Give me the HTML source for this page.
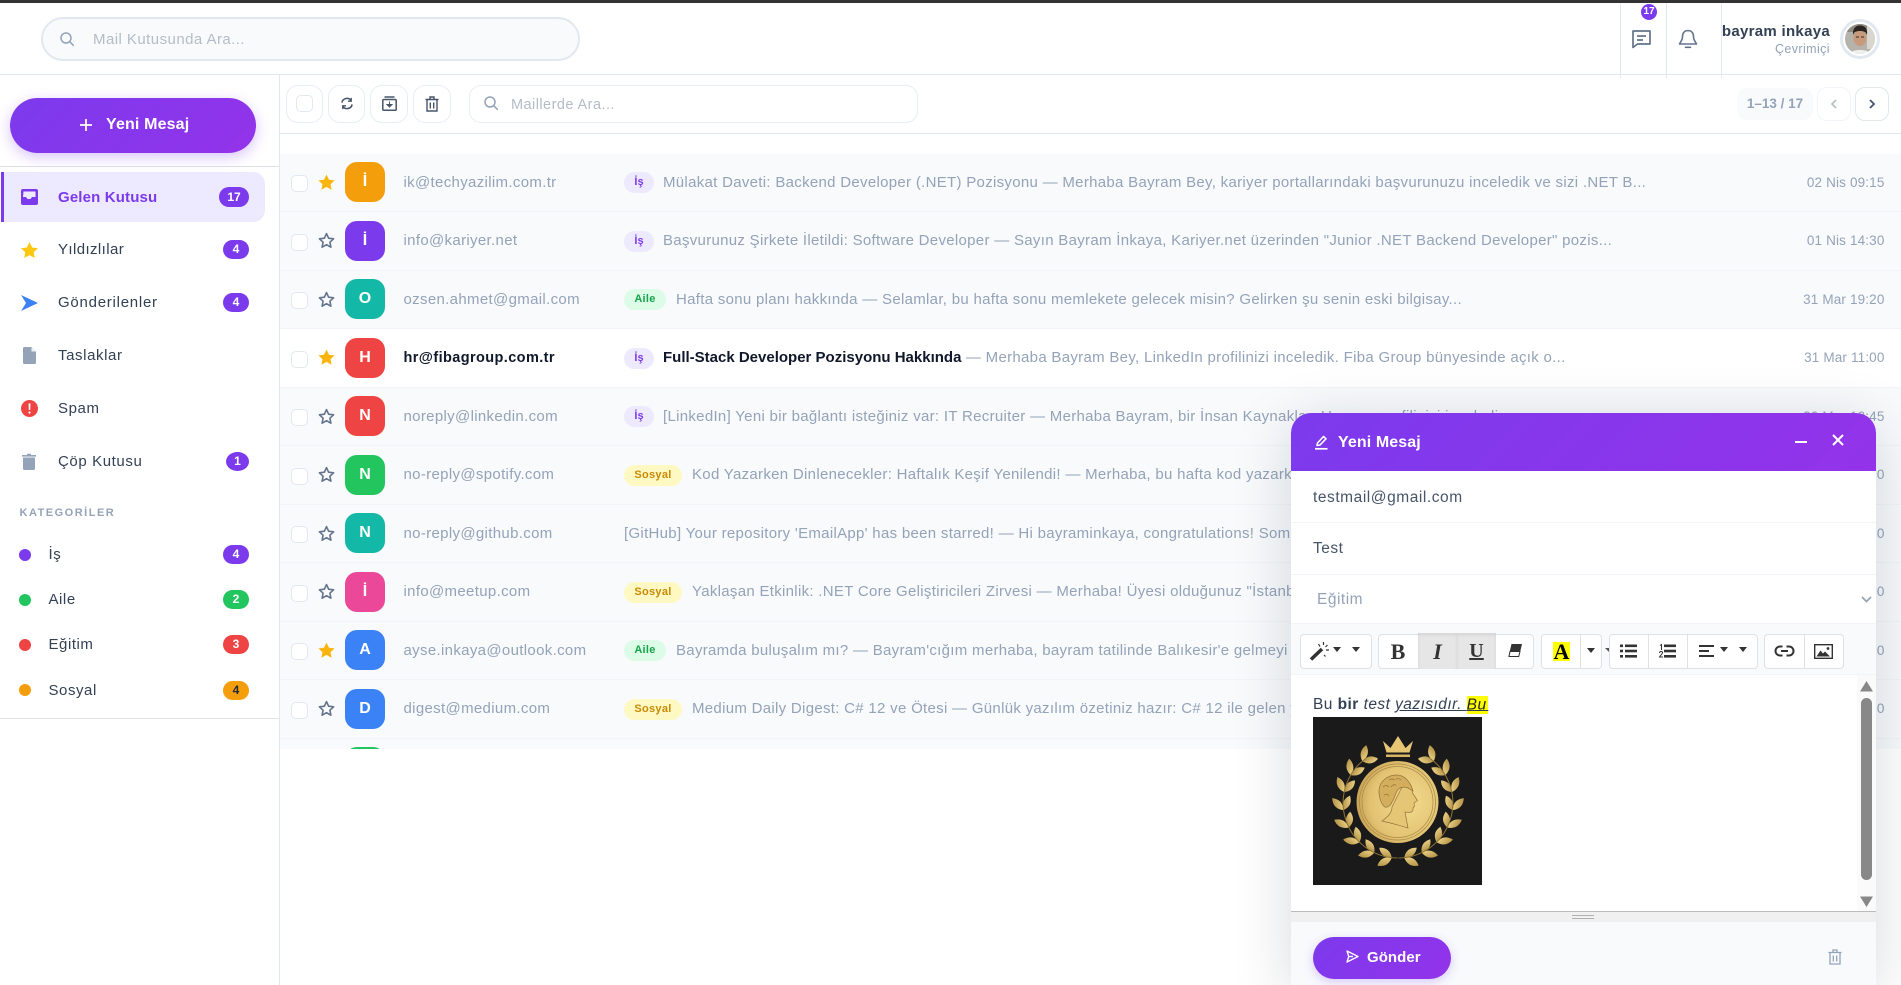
<!DOCTYPE html>
<html lang="tr"><head><meta charset="utf-8"><title>Mail</title>
<style>
*{box-sizing:border-box;margin:0;padding:0}
html,body{width:1901px;height:985px;overflow:hidden;background:#fff;font-family:"Liberation Sans",sans-serif;color:#334155}
.a{position:absolute}
.t{position:absolute;white-space:nowrap}
svg{position:absolute;display:block;overflow:visible}
.line{position:absolute;background:#e2e8f0}
.nav{position:absolute;left:58px;font-size:15px;line-height:20px;color:#334155;letter-spacing:.6px;white-space:nowrap}
.cat{position:absolute;left:48.5px;font-size:15px;line-height:20px;color:#334155;letter-spacing:.55px;white-space:nowrap}
.bd{position:absolute;height:19px;border-radius:10px;background:#7c3aed;color:#fff;font-size:12px;font-weight:700;line-height:19px;text-align:center}
.dot{position:absolute;left:19px;width:12px;height:12px;border-radius:50%}
.row{position:absolute;left:280px;width:1621px;height:58.5px;background:#f8fafc;border-bottom:1px solid #f1f5f9}
.row.w{background:#fff}
.cb{position:absolute;left:11px;top:21.5px;width:17px;height:17px;border:1.5px solid #e2e8f0;border-radius:5px;background:#fff}
.av{position:absolute;left:65px;top:8.5px;width:40px;height:40px;border-radius:12px;color:#fff;font-weight:700;font-size:16px;line-height:40px;text-align:center}
.em{position:absolute;left:123.5px;top:0;line-height:58px;font-size:15px;color:#94a3b8;letter-spacing:.33px;white-space:nowrap}
.w .em{color:#0f172a;font-weight:700;font-size:14.5px;letter-spacing:.4px}
.tag{position:absolute;left:344px;top:18.5px;height:21px;border-radius:11px;font-size:11px;font-weight:700;line-height:21px;text-align:center;letter-spacing:.3px}
.ts{width:30px;background:#ede9fe;color:#7c3aed;letter-spacing:0}
.ta{width:42px;background:#dcfce7;color:#16a34a}
.to{width:58px;background:#fef9c3;color:#ca8a04}
.tx{position:absolute;top:0;line-height:58px;font-size:15px;color:#94a3b8;letter-spacing:.3px;white-space:nowrap}
.tx b{color:#0f172a;font-weight:700;letter-spacing:0}
.dt{position:absolute;right:16.5px;top:0;line-height:58px;font-size:13.5px;color:#94a3b8;letter-spacing:.15px;white-space:nowrap}
.tb{position:absolute;left:286px;top:85px;height:38px;border:1.5px solid #e8edf4;border-radius:12px;background:#fff}
.grp{position:absolute;top:634px;height:35px;border:1px solid #dee2e6;border-radius:4px;background:#fff}
.sep{position:absolute;top:634px;width:1px;height:35px;background:#dee2e6}
</style></head><body>
<svg width="0" height="0" style="position:absolute"><defs>
<path id="so" d="M8.500 1.600l2.100 4.600 5 .6-3.700 3.400 1 5-4.400-2.500-4.400 2.500 1-5L1.400 6.800l5-.6z" fill="none" stroke="#64748b" stroke-width="1.600" stroke-linejoin="round"/>
<path id="sf" d="M8.500 .6l2.500 5.100 5.600.7-4.100 3.800 1.100 5.500-5.100-2.800-5.100 2.800 1.100-5.500L.4 6.400 6 5.700z" fill="#fbb40a"/>
<g id="lf">
<path d="M84.500 141q-2.750 10.450-13.500 9.500q2.750-10.450 13.500-9.500z"/>
<path d="M84.500 141q-3.050-10.150-13.500-8.500q3.050 10.150 13.500 8.500z"/>
</g>
<g id="wr">
<use href="#lf" transform="rotate(6 85 86)"/><use href="#lf" transform="rotate(25 85 86)"/><use href="#lf" transform="rotate(44 85 86)"/><use href="#lf" transform="rotate(63 85 86)"/><use href="#lf" transform="rotate(82 85 86)"/><use href="#lf" transform="rotate(101 85 86)"/><use href="#lf" transform="rotate(120 85 86)"/><use href="#lf" transform="rotate(139 85 86)"/>
<path d="M84.500 141A55 55 0 0 1 53.500 41" fill="none" stroke="#8f7434" stroke-width="1"/>
</g>
<radialGradient id="gd" cx=".62" cy=".5" r=".65"><stop offset="0" stop-color="#f3dc8d"/><stop offset=".7" stop-color="#e3c273"/><stop offset="1" stop-color="#c39d50"/></radialGradient>
<linearGradient id="lv" x1="0" y1="0" x2="0" y2="1"><stop offset="0" stop-color="#e8cd82"/><stop offset="1" stop-color="#b59548"/></linearGradient>
</defs></svg>

<!-- top bar + header -->
<div class="a" style="left:0;top:0;width:1901px;height:3px;background:#333"></div>
<div class="line" style="left:0;top:74px;width:1901px;height:1px"></div>
<div class="a" style="left:41px;top:17px;width:539px;height:44px;background:#f8fafc;border:2px solid #e2e8f0;border-radius:22px"></div>
<svg style="left:60px;top:32px" width="14" height="14" viewBox="0 0 14 14" fill="none" stroke="#94a3b8" stroke-width="1.500"><circle cx="6" cy="6" r="5"/><path d="M10 10l3.300 3.300" stroke-linecap="round"/></svg>
<div class="t" style="left:93px;top:30px;line-height:20px;font-size:15px;color:#b4bcc8;letter-spacing:.45px">Mail Kutusunda Ara...</div>

<div class="line" style="left:1620px;top:3px;width:1px;height:75px"></div>
<div class="line" style="left:1666px;top:3px;width:1px;height:75px"></div>
<div class="line" style="left:1721px;top:3px;width:1px;height:75px"></div>
<svg style="left:1631px;top:29px" width="20" height="20" viewBox="0 0 20 20" fill="none" stroke="#64748b" stroke-width="1.700" stroke-linejoin="round"><path d="M2 2h17v13H6.500L2 18.500z"/><path d="M6 7h9M6 11h6"/></svg>
<div class="a" style="left:1641px;top:4px;width:16px;height:16px;border-radius:50%;background:#7c3aed;color:#fff;font-size:10px;font-weight:700;line-height:16px;text-align:center">17</div>
<svg style="left:1678px;top:29px" width="20" height="20" viewBox="0 0 20 20" fill="none" stroke="#64748b" stroke-width="1.600" stroke-linejoin="round"><path d="M10 1.500c-3.800 0-5.500 3-5.500 6 0 4-2.500 6-3 7.500h17c-.5-1.500-3-3.500-3-7.500 0-3-1.700-6-5.500-6z"/><path d="M7.500 18.300h5" stroke-linecap="round"/></svg>
<div class="t" style="right:71px;top:22px;line-height:20px;font-size:15px;font-weight:700;color:#334155;letter-spacing:.3px">bayram inkaya</div>
<div class="t" style="right:71px;top:41px;line-height:16px;font-size:12.500px;color:#94a3b8;letter-spacing:.4px">Çevrimiçi</div>
<svg style="left:1840px;top:19px" width="40" height="40" viewBox="0 0 40 40"><circle cx="20" cy="20" r="18.500" fill="#fff" stroke="#e2e8f0" stroke-width="3"/><clipPath id="pc"><circle cx="20" cy="20" r="15"/></clipPath><g clip-path="url(#pc)"><rect width="40" height="40" fill="#b5b3ac"/><rect y="0" width="40" height="13" fill="#8d8a80"/><rect x="27" width="10" height="30" fill="#d8d6cf"/><path d="M8 40c0-7 5-9 12-9s12 2 12 9z" fill="#eef0f0"/><ellipse cx="20" cy="19" rx="6.500" ry="8" fill="#c89a7c"/><path d="M13 16c-.5-7 3-9.500 7-9.500s8 2.500 7 9.500c-1-3-3-4-7-4s-6 1-7 4z" fill="#2a2422"/><path d="M16 18h3M21 18h3" stroke="#3a2a22" stroke-width="1"/></g></svg>

<!-- sidebar -->
<div class="line" style="left:279px;top:75px;width:1px;height:910px"></div>
<div class="a" style="left:10px;top:98px;width:246px;height:55px;border-radius:28px;background:linear-gradient(135deg,#7c3aed,#9333ea);box-shadow:0 4px 14px rgba(124,58,237,.3)"></div>
<svg style="left:80px;top:119px" width="12" height="12" viewBox="0 0 12 12" stroke="#fff" stroke-width="1.700"><path d="M6 0v12M0 6h12"/></svg>
<div class="t" style="left:106px;top:115px;line-height:20px;font-size:16px;font-weight:700;color:#fff;letter-spacing:.15px">Yeni Mesaj</div>
<div class="a" style="left:0;top:166px;width:279px;height:1px;background:#dcdfe3"></div>
<div class="a" style="left:1px;top:172px;width:264px;height:50px;background:#ede9fe;border-left:3px solid #7c3aed;border-radius:0 12px 12px 0"></div>

<svg style="left:21px;top:189px" width="17" height="16" viewBox="0 0 17 16"><rect width="17" height="16" rx="2" fill="#7c3aed"/><path d="M2.500 2.500h12v5.500h-3.500l-1.500 2h-3l-1.500-2h-3z" fill="#ede9fe"/></svg>
<div class="nav" style="top:188px;color:#7c3aed;font-weight:700;letter-spacing:.15px">Gelen Kutusu</div>
<div class="bd" style="left:219px;top:187px;width:30px;height:20px;line-height:20px">17</div>

<svg style="left:21px;top:242px" width="17" height="17" viewBox="0 0 17 17"><path d="M8.500 0l2.600 5.500 5.900.7-4.300 4 1.100 5.800-5.300-2.900-5.300 2.900 1.100-5.800L0 6.200l5.900-.7z" fill="#ffc70f"/></svg>
<div class="nav" style="top:240px;letter-spacing:.4px">Yıldızlılar</div>
<div class="bd" style="left:223px;top:240px;width:26px">4</div>

<svg style="left:21px;top:295px" width="17" height="16" viewBox="0 0 17 16"><path d="M0 0l17 8L0 16l5-8z" fill="#3b82f6"/></svg>
<div class="nav" style="top:293px;letter-spacing:.75px">Gönderilenler</div>
<div class="bd" style="left:223px;top:293px;width:26px">4</div>

<svg style="left:23px;top:347px" width="13" height="17" viewBox="0 0 13 17"><path d="M1.500 0h7l4.500 4.500v11a1.500 1.500 0 0 1-1.500 1.500h-10A1.500 1.500 0 0 1 0 15.500v-14A1.500 1.500 0 0 1 1.500 0z" fill="#94a3b8"/><path d="M8.500 0v4.500H13z" fill="#eef2f7"/></svg>
<div class="nav" style="top:346px">Taslaklar</div>

<svg style="left:21px;top:399.500px" width="17" height="17" viewBox="0 0 17 17"><circle cx="8.500" cy="8.500" r="8.500" fill="#ef4444"/><path d="M7.500 3.500h2l-.3 6.500H7.800z" fill="#fff"/><circle cx="8.500" cy="12.500" r="1.100" fill="#fff"/></svg>
<div class="nav" style="top:399px">Spam</div>

<svg style="left:21px;top:453px" width="16" height="17" viewBox="0 0 16 17"><path d="M1 2h5V.8h4V2h5v1.600H1z" fill="#94a3b8"/><path d="M2 4.500h12v11a1.500 1.500 0 0 1-1.500 1.500h-9A1.500 1.500 0 0 1 2 15.500z" fill="#94a3b8"/></svg>
<div class="nav" style="top:452px">Çöp Kutusu</div>
<div class="bd" style="left:226px;top:452px;width:23px;border-radius:50%">1</div>

<div class="t" style="left:19.500px;top:505px;line-height:16px;font-size:11px;font-weight:700;color:#94a3b8;letter-spacing:1.500px">KATEGORİLER</div>

<div class="dot" style="top:549px;background:#7c3aed"></div><div class="cat" style="top:545px">İş</div><div class="bd" style="left:223px;top:545px;width:26px">4</div>
<div class="dot" style="top:594px;background:#22c55e"></div><div class="cat" style="top:590px">Aile</div><div class="bd" style="left:223px;top:590px;width:26px;background:#22c55e">2</div>
<div class="dot" style="top:639px;background:#ef4444"></div><div class="cat" style="top:635px">Eğitim</div><div class="bd" style="left:223px;top:635px;width:26px;background:#ef4444">3</div>
<div class="dot" style="top:684px;background:#f59e0b"></div><div class="cat" style="top:681px">Sosyal</div><div class="bd" style="left:223px;top:681px;width:26px;background:#f59e0b;color:#1f2937">4</div>
<div class="a" style="left:0;top:718px;width:279px;height:1px;background:#e2e4e8"></div>

<!-- mail toolbar -->
<div class="line" style="left:280px;top:133px;width:1621px;height:1px"></div>
<div class="tb" style="left:286px;width:37px"></div>
<div class="a" style="left:296px;top:95px;width:17px;height:17px;border:1.500px solid #e2e8f0;border-radius:5px"></div>
<div class="tb" style="left:328px;width:37px"></div>
<svg style="left:340px;top:97px" width="14" height="13" viewBox="0 0 14 14" fill="none" stroke="#475569" stroke-width="1.700"><path d="M1.500 6A5.500 5.500 0 0 1 11.500 4M12.500 8A5.500 5.500 0 0 1 2.500 10"/><path d="M11.500 1v3.500H8M2.500 13V9.500H6" stroke-width="1.500"/></svg>
<div class="tb" style="left:370px;width:38px"></div>
<svg style="left:382px;top:96px" width="15" height="15" viewBox="0 0 15 15" fill="none" stroke="#475569" stroke-width="1.500"><rect x=".8" y="3.500" width="13.400" height="10.700" rx="1"/><path d="M2.500 1h10"/><path d="M7.500 5.500v5M5 8.500l2.500 2.500 2.500-2.500z" fill="#475569" stroke-width="1"/></svg>
<div class="tb" style="left:413px;width:38px"></div>
<svg style="left:425px;top:96px" width="14" height="16" viewBox="0 0 14 16" fill="none" stroke="#475569" stroke-width="1.400"><path d="M.5 3.500h13M5 3.500V1h4v2.500"/><path d="M2 3.500v11.500h10V3.500M5.300 6.500v6M8.700 6.500v6"/></svg>
<div class="tb" style="left:469px;width:449px"></div>
<svg style="left:484px;top:96px" width="14" height="14" viewBox="0 0 14 14" fill="none" stroke="#94a3b8" stroke-width="1.500"><circle cx="6" cy="6" r="5"/><path d="M10 10l3.300 3.300" stroke-linecap="round"/></svg>
<div class="t" style="left:511px;top:95px;line-height:20px;font-size:14.500px;color:#b4bcc8;letter-spacing:.45px">Maillerde Ara...</div>

<div class="a" style="left:1737px;top:88px;width:76px;height:32px;background:#f8fafc;border-radius:10px;color:#94a3b8;font-size:13.500px;font-weight:700;line-height:32px;text-align:center">1–13 / 17</div>
<div class="a" style="left:1817px;top:87px;width:34px;height:34px;border:1px solid #f1f5f9;border-radius:10px"></div>
<svg style="left:1830px;top:99px" width="8" height="10" viewBox="0 0 8 10" fill="none" stroke="#b4bcc8" stroke-width="1.600"><path d="M6 1L2 5l4 4"/></svg>
<div class="a" style="left:1855px;top:87px;width:34px;height:34px;border:1px solid #e2e8f0;border-radius:10px"></div>
<svg style="left:1868px;top:99px" width="8" height="10" viewBox="0 0 8 10" fill="none" stroke="#475569" stroke-width="1.800"><path d="M2 1l4 4-4 4"/></svg>

<!-- rows -->
<div class="row" style="top:153.500px"><div class="cb"></div><svg style="left:38px;top:20px" width="17" height="17"><use href="#sf"/></svg><div class="av" style="background:#f59e0b">İ</div><div class="em">ik@techyazilim.com.tr</div><div class="tag ts">İş</div><div class="tx" style="left:383px">Mülakat Daveti: Backend Developer (.NET) Pozisyonu — Merhaba Bayram Bey, kariyer portallarındaki başvurunuzu inceledik ve sizi .NET B...</div><div class="dt">02 Nis 09:15</div></div>
<div class="row" style="top:212px"><div class="cb"></div><svg style="left:38px;top:20px" width="17" height="17"><use href="#so"/></svg><div class="av" style="background:#7c3aed">İ</div><div class="em">info@kariyer.net</div><div class="tag ts">İş</div><div class="tx" style="left:383px">Başvurunuz Şirkete İletildi: Software Developer — Sayın Bayram İnkaya, Kariyer.net üzerinden "Junior .NET Backend Developer" pozis...</div><div class="dt">01 Nis 14:30</div></div>
<div class="row" style="top:270.500px"><div class="cb"></div><svg style="left:38px;top:20px" width="17" height="17"><use href="#so"/></svg><div class="av" style="background:#14b8a6">O</div><div class="em">ozsen.ahmet@gmail.com</div><div class="tag ta">Aile</div><div class="tx" style="left:396px">Hafta sonu planı hakkında — Selamlar, bu hafta sonu memlekete gelecek misin? Gelirken şu senin eski bilgisay...</div><div class="dt">31 Mar 19:20</div></div>
<div class="row w" style="top:329px"><div class="cb"></div><svg style="left:38px;top:20px" width="17" height="17"><use href="#sf"/></svg><div class="av" style="background:#ef4444">H</div><div class="em">hr@fibagroup.com.tr</div><div class="tag ts">İş</div><div class="tx" style="left:383px"><b>Full-Stack Developer Pozisyonu Hakkında</b> — Merhaba Bayram Bey, LinkedIn profilinizi inceledik. Fiba Group bünyesinde açık o...</div><div class="dt">31 Mar 11:00</div></div>
<div class="row" style="top:387.500px"><div class="cb"></div><svg style="left:38px;top:20px" width="17" height="17"><use href="#so"/></svg><div class="av" style="background:#ef4444">N</div><div class="em">noreply@linkedin.com</div><div class="tag ts">İş</div><div class="tx" style="left:383px">[LinkedIn] Yeni bir bağlantı isteğiniz var: IT Recruiter — Merhaba Bayram, bir İnsan Kaynakları Uzmanı profilinizi inceledi...</div><div class="dt">30 Mar 10:45</div></div>
<div class="row" style="top:446px"><div class="cb"></div><svg style="left:38px;top:20px" width="17" height="17"><use href="#so"/></svg><div class="av" style="background:#22c55e">N</div><div class="em">no-reply@spotify.com</div><div class="tag to">Sosyal</div><div class="tx" style="left:412px">Kod Yazarken Dinlenecekler: Haftalık Keşif Yenilendi! — Merhaba, bu hafta kod yazarken dinleyebileceğin...</div><div class="dt">29 Mar 08:00</div></div>
<div class="row" style="top:504.500px"><div class="cb"></div><svg style="left:38px;top:20px" width="17" height="17"><use href="#so"/></svg><div class="av" style="background:#14b8a6">N</div><div class="em">no-reply@github.com</div><div class="tx" style="left:344px">[GitHub] Your repository 'EmailApp' has been starred! — Hi bayraminkaya, congratulations! Someone starred...</div><div class="dt">28 Mar 22:10</div></div>
<div class="row" style="top:563px"><div class="cb"></div><svg style="left:38px;top:20px" width="17" height="17"><use href="#so"/></svg><div class="av" style="background:#ec4899">İ</div><div class="em">info@meetup.com</div><div class="tag to">Sosyal</div><div class="tx" style="left:412px">Yaklaşan Etkinlik: .NET Core Geliştiricileri Zirvesi — Merhaba! Üyesi olduğunuz "İstanbul Yazılım..."</div><div class="dt">27 Mar 16:00</div></div>
<div class="row" style="top:621.500px"><div class="cb"></div><svg style="left:38px;top:20px" width="17" height="17"><use href="#sf"/></svg><div class="av" style="background:#3b82f6">A</div><div class="em">ayse.inkaya@outlook.com</div><div class="tag ta">Aile</div><div class="tx" style="left:396px">Bayramda buluşalım mı? — Bayram'cığım merhaba, bayram tatilinde Balıkesir'e gelmeyi düşünüyor...</div><div class="dt">26 Mar 12:30</div></div>
<div class="row" style="top:680px"><div class="cb"></div><svg style="left:38px;top:20px" width="17" height="17"><use href="#so"/></svg><div class="av" style="background:#3b82f6">D</div><div class="em">digest@medium.com</div><div class="tag to">Sosyal</div><div class="tx" style="left:412px">Medium Daily Digest: C# 12 ve Ötesi — Günlük yazılım özetiniz hazır: C# 12 ile gelen yenilikler...</div><div class="dt">25 Mar 07:00</div></div>
<div class="a" style="left:280px;top:738.500px;width:1621px;height:10.500px;background:#f8fafc;overflow:hidden"><div class="a" style="left:65px;top:8.500px;width:40px;height:40px;border-radius:12px;background:#22c55e"></div></div>

<!-- compose -->
<div class="a" style="left:1291px;top:413px;width:585px;height:572px;background:#fff;border-radius:20px 20px 0 0;box-shadow:0 10px 60px rgba(15,23,42,.16)"></div>
<div class="a" style="left:1291px;top:413px;width:585px;height:58px;border-radius:20px 20px 0 0;background:linear-gradient(135deg,#7c3aed,#9333ea)"></div>
<svg style="left:1315px;top:435px" width="13" height="15" viewBox="0 0 13 15" fill="none" stroke="#fff" stroke-width="1.600"><path d="M2 10.500l.5-2.500L8.500 1.500l2.500 2.300-6 6.200z" stroke-linejoin="round"/><path d="M0 13.800h12.500" stroke-width="1.700"/></svg>
<div class="t" style="left:1338px;top:433px;line-height:20px;font-size:16px;font-weight:700;color:#fff;letter-spacing:.1px">Yeni Mesaj</div>
<svg style="left:1795px;top:435px" width="12" height="14" viewBox="0 0 12 14" stroke="#fff" stroke-width="2"><path d="M0 7h12"/></svg>
<svg style="left:1832px;top:434px" width="12" height="12" viewBox="0 0 12 12" stroke="#fff" stroke-width="2"><path d="M1 1l10 10M11 1L1 11"/></svg>

<div class="t" style="left:1313px;top:488px;line-height:20px;font-size:15.500px;color:#475569;letter-spacing:.55px">testmail@gmail.com</div>
<div class="a" style="left:1291px;top:522px;width:585px;height:1px;background:#f1f5f9"></div>
<div class="t" style="left:1313px;top:539px;line-height:20px;font-size:15.500px;color:#475569;letter-spacing:.5px">Test</div>
<div class="a" style="left:1291px;top:574px;width:585px;height:1px;background:#f1f5f9"></div>
<div class="t" style="left:1317px;top:590px;line-height:20px;font-size:15.500px;color:#94a3b8;letter-spacing:.5px">Eğitim</div>
<svg style="left:1861px;top:596px" width="11" height="7" viewBox="0 0 11 7" fill="none" stroke="#94a3b8" stroke-width="1.800"><path d="M1 1l4.500 4.500L10 1"/></svg>

<div class="a" style="left:1291px;top:623px;width:585px;height:52px;background:#f8fafc;border-top:1px solid #f1f5f9;border-bottom:1px solid #f1f5f9"></div>
<!-- toolbar group 1 -->
<div class="grp" style="left:1300px;width:72px"></div>
<svg style="left:1310px;top:641px" width="22" height="21" viewBox="0 0 22 21"><path d="M1 18.500L12 8" stroke="#333" stroke-width="3.500"/><path d="M13.500 1v3M8.500 3l1.500 2.500M19 9h-3M14 14l1.500 1.500M17.500 4l-2 2" stroke="#333" stroke-width="1.200" fill="none"/></svg>
<svg style="left:1333px;top:647px" width="8" height="6" viewBox="0 0 8 6"><path d="M0 0h8L4 5z" fill="#333"/></svg>
<svg style="left:1352px;top:647px" width="8" height="6" viewBox="0 0 8 6"><path d="M0 0h8L4 5z" fill="#333"/></svg>
<!-- group 2 -->
<div class="grp" style="left:1378px;width:156px"></div>
<div class="a" style="left:1418px;top:633px;width:39px;height:36px;background:#e6e6e6;box-shadow:inset 0 2px 3px rgba(0,0,0,.08)"></div>
<div class="a" style="left:1457px;top:633px;width:39px;height:36px;background:#e6e6e6;box-shadow:inset 0 2px 3px rgba(0,0,0,.08)"></div>
<div class="t" style="left:1378px;top:634px;width:40px;text-align:center;font:700 22px/35px 'Liberation Serif',serif;color:#333">B</div>
<div class="t" style="left:1418px;top:634px;width:39px;text-align:center;font:italic 700 22px/35px 'Liberation Serif',serif;color:#333">I</div>
<div class="t" style="left:1457px;top:634px;width:39px;text-align:center;font:700 20px/35px 'Liberation Serif',serif;color:#333;text-decoration:underline">U</div>
<svg style="left:1508px;top:644px" width="14" height="14" viewBox="0 0 14 14"><path d="M3.500 0H14l-3 12.500H.5z" fill="#333"/><path d="M2 7.500h10l-1.300 5H1z" fill="#fff" stroke="#333"/></svg>
<!-- group 3 -->
<div class="grp" style="left:1541px;width:61px"></div>
<div class="sep" style="left:1580px"></div>
<div class="a" style="left:1553px;top:642px;width:17px;height:19px;background:#ff0;color:#000;font:700 22px/20px 'Liberation Serif',serif;text-align:center">A</div>
<svg style="left:1587px;top:648px" width="8" height="6" viewBox="0 0 8 6"><path d="M0 0h8L4 5z" fill="#333"/></svg>
<svg style="left:1605px;top:648px" width="4" height="5" viewBox="0 0 4 5"><path d="M0 0h4L4 4z" fill="#555"/></svg>
<!-- group 4 -->
<div class="grp" style="left:1609px;width:149px"></div>
<div class="sep" style="left:1648px"></div><div class="sep" style="left:1687px"></div>
<svg style="left:1620px;top:644px" width="17" height="14" viewBox="0 0 17 14" fill="#333"><rect width="3" height="2.600" y=".5"/><rect x="5" width="12" height="2.600" y=".5"/><rect width="3" height="2.600" y="5.700"/><rect x="5" width="12" height="2.600" y="5.700"/><rect width="3" height="2.600" y="11"/><rect x="5" width="12" height="2.600" y="11"/></svg>
<svg style="left:1659px;top:644px" width="17" height="14" viewBox="0 0 17 14"><rect x="5" width="12" height="2.600" y=".5" fill="#333"/><rect x="5" width="12" height="2.600" y="5.700" fill="#333"/><rect x="5" width="12" height="2.600" y="11" fill="#333"/><path d="M1 1.500l1.500-1v5.500" stroke="#333" fill="none"/><path d="M.5 9c0-2 3.500-2 3-.2 0 1-2.500 3-3 4.200h3.500" stroke="#333" fill="none"/></svg>
<svg style="left:1699px;top:645px" width="15" height="13" viewBox="0 0 15 13" fill="#333"><rect width="15" height="2"/><rect y="5" width="10" height="2"/><rect y="10" width="15" height="2"/></svg>
<svg style="left:1720px;top:647px" width="8" height="6" viewBox="0 0 8 6"><path d="M0 0h8L4 5z" fill="#333"/></svg>
<svg style="left:1739px;top:647px" width="8" height="6" viewBox="0 0 8 6"><path d="M0 0h8L4 5z" fill="#333"/></svg>
<!-- group 5 -->
<div class="grp" style="left:1764px;width:80px"></div>
<div class="sep" style="left:1804px"></div>
<svg style="left:1775px;top:645px" width="19" height="12" viewBox="0 0 19 12" fill="none" stroke="#333" stroke-width="2"><path d="M7.500 1.500H5a4.500 4.500 0 0 0 0 9h2.500M11.500 1.500H14a4.500 4.500 0 0 1 0 9h-2.500M6 6h7"/></svg>
<svg style="left:1814px;top:644px" width="19" height="15" viewBox="0 0 19 15"><rect x=".7" y=".7" width="17.600" height="13.600" fill="none" stroke="#333" stroke-width="1.400"/><path d="M2.500 12.500l4-6 2.500 3 2-2 5 5z" fill="#333"/><circle cx="14" cy="4.500" r="1.400" fill="#333"/></svg>

<!-- editor -->
<div class="t" style="left:1313px;top:695px;line-height:20px;font-size:15.500px;color:#334155;letter-spacing:.45px">Bu <b>bir</b> <i>test <u>yazısıdır. <span style="background:#ff0;color:#222;padding:.5px 0">Bu<span style="letter-spacing:-2.500px">&nbsp;</span></span></u></i></div>
<svg style="left:1313px;top:717px" width="169" height="168" viewBox="0 0 169 168"><rect width="169" height="168" fill="#1a1a1a"/>
<g fill="url(#lv)"><use href="#wr"/><use href="#wr" transform="translate(170 0) scale(-1 1)"/></g>
<path d="M70 24l7.500 7 7.500-12 7.500 12 7.500-7-3.500 11.500H73.500z" fill="#e6c675"/><rect x="73" y="37.500" width="24" height="2.500" fill="#d8b660"/>
<circle cx="84.500" cy="85" r="41" fill="url(#gd)"/><circle cx="84.500" cy="85" r="38" fill="none" stroke="#a88a44" stroke-width=".8"/><circle cx="84.500" cy="85" r="35.500" fill="none" stroke="#a88a44" stroke-width=".7"/>
<path d="M92 64C97 68 99 72 99.500 76L104.500 83.500 101 86 101.500 89 100 91C100.500 95 98 96 92 95L95 111C85 108 78 106 69 104 76 99 79 95 79 90z" fill="#e4c676" stroke="#94743a" stroke-width=".7"/>
<path d="M84 58C74 58 66 65 66 74 66 82 69 88 72 90 75 91 78 88 79 85 83 80 82 74 87 71 91 69 96 71 100 74 98 66 92 58 84 58z" fill="#d3ae5c" stroke="#94743a" stroke-width=".7"/>
<path d="M70 70q3-3 6 0M76 63q3-2 6 0M83 62q3-1 5 1M71 78q3-2 5 1M78 70q2-3 5-2" fill="none" stroke="#94743a" stroke-width=".7"/>
</svg>

<!-- scrollbar -->
<div class="a" style="left:1857px;top:675px;width:19px;height:236px;background:#fafafa"></div>
<svg style="left:1860px;top:680px" width="13" height="12" viewBox="0 0 13 12"><path d="M6.500 1L13 11.500H0z" fill="#888"/></svg>
<div class="a" style="left:1861px;top:698px;width:11px;height:182px;background:#888;border-radius:6px"></div>
<svg style="left:1860px;top:896px" width="13" height="12" viewBox="0 0 13 12"><path d="M6.500 11L13 .5H0z" fill="#888"/></svg>
<!-- resize -->
<div class="a" style="left:1291px;top:911px;width:585px;height:11px;background:#f0f0f0;border-top:1px solid #bbb"></div>
<div class="a" style="left:1572px;top:914.500px;width:22px;height:4.500px;border-top:1px solid #b0b0b0;border-bottom:1px solid #b0b0b0"></div>
<!-- footer -->
<div class="a" style="left:1291px;top:922px;width:585px;height:63px;background:#f8fafc"></div>
<div class="a" style="left:1313px;top:937px;width:138px;height:42px;border-radius:21px;background:linear-gradient(135deg,#7c3aed,#9333ea);box-shadow:0 3px 10px rgba(124,58,237,.25)"></div>
<svg style="left:1346px;top:950px" width="13" height="13" viewBox="0 0 13 13" fill="none" stroke="#fff" stroke-width="1.400" stroke-linejoin="round"><path d="M1 1l11 5.500L1 12l1.800-5.500z"/><path d="M2.800 6.500H7"/></svg>
<div class="t" style="left:1367px;top:948px;line-height:20px;font-size:15px;font-weight:700;color:#fff;letter-spacing:.05px">Gönder</div>
<svg style="left:1828px;top:949px" width="14" height="16" viewBox="0 0 14 16" fill="none" stroke="#94a3b8" stroke-width="1.300"><path d="M.5 3.500h13M5 3.500V1h4v2.500"/><path d="M2 3.500v11.500h10V3.500M5.300 6.500v6M8.700 6.500v6"/></svg>
</body></html>
